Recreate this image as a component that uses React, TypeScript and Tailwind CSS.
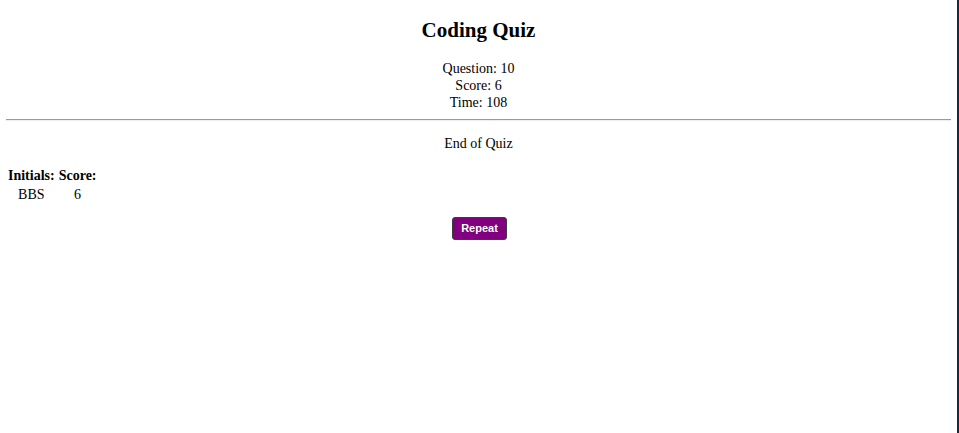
import React from "react";

export default function App() {
  return (
    <div className="w-[959px] h-[433px] bg-white flex" style={{ fontFamily: '"Liberation Serif", serif' }}>
      <div className="w-[959px] h-full border-r-2 border-[#1a2840] flex flex-col text-black">
        <h1 className="mt-[18px] text-center text-[21px] leading-[24px] font-bold">Coding Quiz</h1>
        <div className="mt-[18px] flex flex-col items-center text-[14px] leading-[17px]">
          <div>Question: 10</div>
          <div>Score: 6</div>
          <div>Time: 108</div>
        </div>
        <div className="mt-[8px] mx-[6px] border-t border-t-[#9a9a9a] border-b border-b-[#eeeeee]" />
        <div className="mt-[14px] text-center text-[14px] leading-[17px]">End of Quiz</div>
        <table className="mt-[13px] ml-[5px] self-start border-separate border-spacing-[2px] text-[14px] leading-[16px]">
          <thead>
            <tr>
              <th className="p-[1px] font-bold text-left">Initials:</th>
              <th className="p-[1px] font-bold text-left">Score:</th>
            </tr>
          </thead>
          <tbody>
            <tr>
              <td className="p-[1px] pb-[2px] text-center leading-[13px]">BBS</td>
              <td className="p-[1px] pb-[2px] text-center leading-[13px]">6</td>
            </tr>
          </tbody>
        </table>
        <div className="mt-[12px] flex justify-center pl-[2px]">
          <button
            className="w-[55px] h-[23px] bg-[#800080] text-white text-[11px] font-bold rounded-[3px] border border-[#3c3c3c]"
            style={{ fontFamily: '"Liberation Sans", Arial, sans-serif' }}
          >
            Repeat
          </button>
        </div>
      </div>
    </div>
  );
}
